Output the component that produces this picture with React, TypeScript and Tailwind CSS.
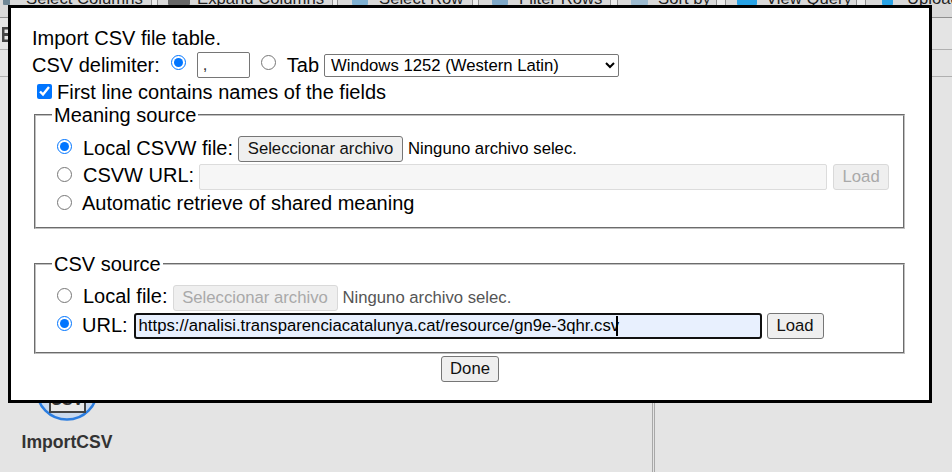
function Radio({ checked, disabled, className }: { checked?: boolean; disabled?: boolean; className?: string }) {
  return (
    <input
      type="radio"
      readOnly
      checked={!!checked}
      disabled={disabled}
      className={`m-0 h-[15px] w-[15px] shrink-0 appearance-auto ${className ?? ""}`}
    />
  );
}

function GrayButton({ label, disabled, className }: { label: string; disabled?: boolean; className?: string }) {
  return (
    <button
      disabled={disabled}
      className={`h-[26px] shrink-0 rounded-[3px] border text-center text-[16.7px] leading-none ${
        disabled ? "border-[#d9d9d9] bg-[#efefef] text-[#a9a9a9]" : "border-[#767676] bg-[#efefef] text-[#111]"
      } ${className ?? ""}`}
    >
      {label}
    </button>
  );
}

function Sep({ width }: { width: string }) {
  return <div className={`h-full shrink-0 border-x border-[#8f8f8f] bg-[#ececec] ${width}`} />;
}

function ToolCell({ label, width, pad, gap, iconWidth, icon }: { label: string; width: string; pad: string; gap: string; iconWidth: string; icon: string }) {
  return (
    <div className={`flex h-full shrink-0 items-start ${width} ${pad} ${gap}`}>
      <span className={`mt-[-2px] h-[7px] shrink-0 rounded-[1px] ${iconWidth} ${icon}`} />
      <span className="mt-[-11px] whitespace-nowrap text-[16.7px] leading-[20px] text-[#222]">{label}</span>
    </div>
  );
}

function CsvIcon() {
  return (
    <svg width="64" height="64" viewBox="0 0 64 64">
      <circle cx="32" cy="32" r="30.5" fill="#c9d9ee" stroke="#2b7de0" strokeWidth="2.5" />
      <rect x="15" y="18" width="35" height="37" fill="#e8e8e8" stroke="#444" strokeWidth="2" />
      <text x="32" y="48" textAnchor="middle" fontSize="16" fontWeight="700" fill="#333">CSV</text>
    </svg>
  );
}

export default function App() {
  return (
    <div className="relative h-[472px] w-[952px] overflow-hidden bg-[#e4e4e4] font-['Liberation_Sans',Arial,sans-serif] text-black">
      <div className="flex h-[18px] overflow-hidden border-b border-[#8f8f8f] bg-[#d9d9d9]">
        <ToolCell label="Select Columns" width="w-[151px]" pad="pl-[3px]" gap="gap-[16px]" iconWidth="w-[7px]" icon="bg-[#6f8796]" />
        <Sep width="w-[7px]" />
        <ToolCell label="Expand Columns" width="w-[174px]" pad="pl-[10px]" gap="gap-[7px]" iconWidth="w-[22px]" icon="bg-[#666]" />
        <Sep width="w-[6px]" />
        <ToolCell label="Select Row" width="w-[134px]" pad="pl-[14px]" gap="gap-[11px]" iconWidth="w-[16px]" icon="bg-[#7fb0d2]" />
        <Sep width="w-[7px]" />
        <ToolCell label="Filter Rows" width="w-[131px]" pad="pl-[13px]" gap="gap-[11px]" iconWidth="w-[16px]" icon="bg-[#7fa8c8]" />
        <Sep width="w-[8px]" />
        <ToolCell label="Sort by" width="w-[98px]" pad="pl-[13px]" gap="gap-[10px]" iconWidth="w-[17px]" icon="bg-[#9dbbd0]" />
        <Sep width="w-[10px]" />
        <ToolCell label="View Query" width="w-[130px]" pad="pl-[11px]" gap="gap-[9px]" iconWidth="w-[20px]" icon="bg-[#29a3e6]" />
        <Sep width="w-[10px]" />
        <ToolCell label="Upload" width="w-[86px]" pad="pl-[16px]" gap="gap-[14px]" iconWidth="w-[11px]" icon="bg-[#29a3e6]" />
      </div>
      <div className="flex h-[32px] items-start border-b border-[#b0b0b0] pl-[2px] pt-[9px]">
        <svg width="7" height="15" viewBox="0 0 7 15">
          <path d="M0 0H7V15H0ZM2.5 2.5V6H7V2.5ZM2.5 9V12.5H7V9Z" fill="#444" fillRule="evenodd" />
        </svg>
      </div>
      <div className="h-[27px] border-b border-[#b0b0b0]" />
      <div className="flex h-[395px]">
        <div className="w-[652px] pl-[22px] pt-[280px]">
          <div className="flex w-[90px] flex-col items-center">
            <CsvIcon />
            <span className="mt-[11px] whitespace-nowrap text-[17.6px] font-bold leading-[20px] text-[#333]">ImportCSV</span>
          </div>
        </div>
        <div className="h-full w-[3px] border-x border-[#a8a8a8]" />
      </div>

      <div className="absolute left-[8px] top-[5px] h-[398px] w-[924px] border-[3px] border-black bg-white pl-[21px] pt-[18px] text-[20px] leading-[24px]">
        <div>Import CSV file table.</div>
        <div className="mt-[2px] flex h-[26px] items-center">
          <span>CSV delimiter:</span>
          <Radio checked className="ml-[11px] -translate-y-[3px]" />
          <input readOnly value="," className="ml-[11px] h-[26px] w-[53px] rounded-[2px] border border-[#767676] px-[5px] text-[16.7px] text-[#333]" />
          <Radio className="ml-[11px] -translate-y-[3px]" />
          <span className="ml-[11px]">Tab</span>
          <select className="ml-[5px] h-[23px] w-[295px] appearance-auto rounded-[2px] border border-[#767676] pl-[2px] text-[16.7px]">
            <option>Windows 1252 (Western Latin)</option>
          </select>
        </div>
        <label className="ml-[5px] mt-[2px] flex h-[24px] items-center">
          <input type="checkbox" readOnly checked className="m-0 h-[15px] w-[15px] -translate-y-[1px] appearance-auto" />
          <span className="ml-[5px]">First line contains names of the fields</span>
        </label>
        <fieldset className="ml-[2px] mt-[-1px] h-[126px] w-[871px] border-2 border-[#c0c0c0] pl-[21px] [border-style:groove]">
          <legend className="ml-[-5px] h-[23px] px-[2px]">Meaning source</legend>
          <div className="mt-[7px] flex h-[28px] items-center">
            <Radio checked className="-translate-y-[1px]" />
            <span className="ml-[11px] translate-y-[1px]">Local CSVW file:</span>
            <GrayButton label="Seleccionar archivo" className="ml-[5px] w-[165px] translate-y-[2px]" />
            <span className="ml-[5px] translate-y-[2px] text-[16.7px]">Ninguno archivo selec.</span>
          </div>
          <div className="flex h-[28px] items-center">
            <Radio className="-translate-y-[1px]" />
            <span className="ml-[11px]">CSVW URL:</span>
            <input disabled className="ml-[5px] h-[26px] w-[628px] translate-y-[2px] rounded-[2px] border border-[#dcdcdc] bg-[#f6f6f6]" />
            <GrayButton disabled label="Load" className="ml-[6px] w-[56px] translate-y-[2px]" />
          </div>
          <div className="flex h-[28px] items-center">
            <Radio className="-translate-y-[1px]" />
            <span className="ml-[10px]">Automatic retrieve of shared meaning</span>
          </div>
        </fieldset>
        <fieldset className="ml-[2px] mt-[23px] h-[102px] w-[871px] border-2 border-[#c0c0c0] pl-[21px] [border-style:groove]">
          <legend className="ml-[-5px] h-[23px] px-[2px]">CSV source</legend>
          <div className="mt-[9px] flex h-[28px] items-center">
            <Radio className="-translate-y-[3px]" />
            <span className="ml-[11px] -translate-y-[2px]">Local file:</span>
            <GrayButton disabled label="Seleccionar archivo" className="ml-[5px] w-[165px]" />
            <span className="ml-[5px] text-[16.7px] text-[#555]">Ninguno archivo selec.</span>
          </div>
          <div className="flex h-[28px] items-center">
            <Radio checked className="-translate-y-[3px]" />
            <span className="ml-[10px] -translate-y-[1px]">URL:</span>
            <div className="ml-[6px] flex h-[26px] w-[628px] items-center rounded-[3px] border-[2px] border-[#101010] bg-[#e8f0fe] pl-[3px] text-[16.7px]">
              <span className="whitespace-nowrap">https://analisi.transparenciacatalunya.cat/resource/gn9e-3qhr.csv</span>
              <span className="ml-[-3px] h-[20px] w-[2px] bg-black" />
            </div>
            <GrayButton label="Load" className="ml-[5px] w-[57px]" />
          </div>
        </fieldset>
        <div className="flex h-[26px] w-[876px] justify-center">
          <GrayButton label="Done" className="mt-[2px] w-[58px]" />
        </div>
      </div>
    </div>
  );
}
